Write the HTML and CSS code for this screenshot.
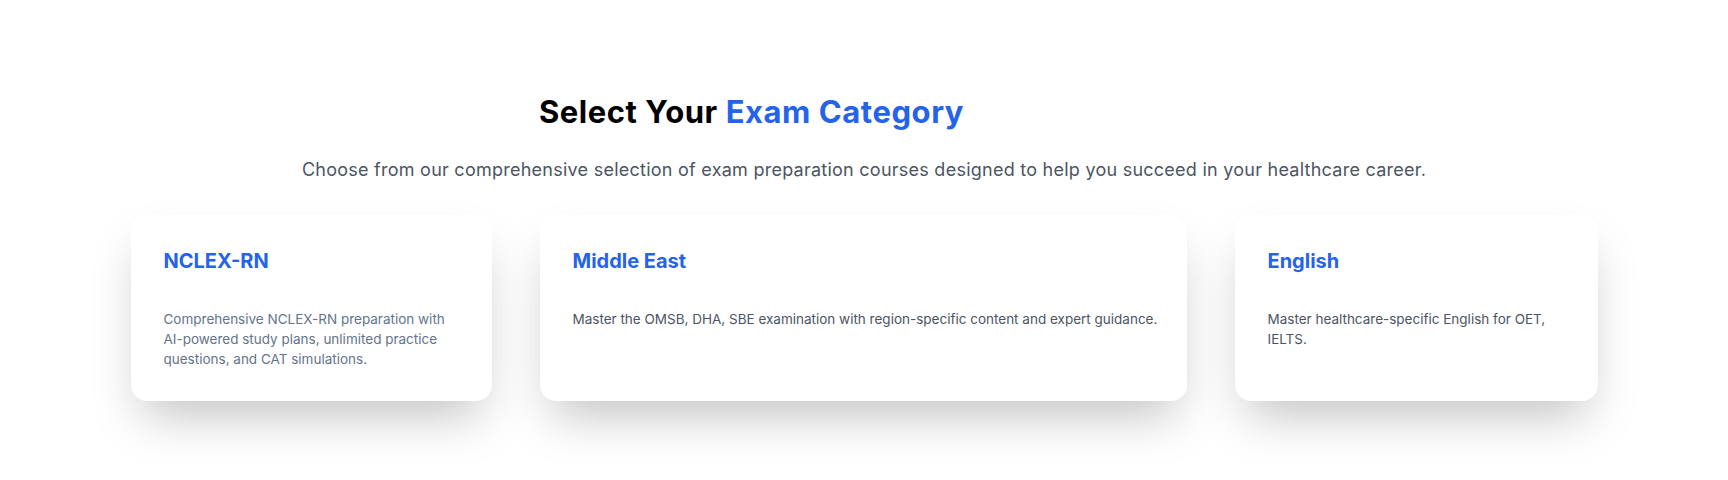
FILE: index.html
```html
<!DOCTYPE html>
<html lang="en">
<head>
<meta charset="utf-8">
<title>Select Your Exam Category</title>
<link rel="stylesheet" href="styles.css">
</head>
<body>
<section class="exams">
  <h2 class="exams-title">Select Your <span class="accent">Exam Category</span></h2>
  <p class="exams-sub">Choose from our comprehensive selection of exam preparation courses designed to help you succeed in your healthcare career.</p>
  <div class="cards">
    <div class="card card-nclex">
      <h3 class="card-title">NCLEX-RN</h3>
      <p class="card-text card-text-slate">Comprehensive NCLEX-RN preparation with AI-powered study plans, unlimited practice questions, and CAT simulations.</p>
    </div>
    <div class="card card-me">
      <h3 class="card-title">Middle East</h3>
      <p class="card-text">Master the OMSB, DHA, SBE examination with region-specific content and expert guidance.</p>
    </div>
    <div class="card card-en">
      <h3 class="card-title">English</h3>
      <p class="card-text">Master healthcare-specific English for OET, IELTS.</p>
    </div>
  </div>
</section>
</body>
</html>
```
FILE: styles.css
```css
* { box-sizing: border-box; }
html, body {
  margin: 0;
  padding: 0;
  background: #ffffff;
  font-family: Inter, "Noto Sans", "Liberation Sans", sans-serif;
}
.exams {
  padding-top: 94px;
  padding-bottom: 80px;
  min-height: 480px;
  display: flex;
  flex-direction: column;
  align-items: center;
}
.exams-title {
  margin: 0;
  font-size: 31px;
  line-height: 36px;
  font-weight: 700;
  letter-spacing: 0.55px;
  color: #000000;
  width: 100%;
  text-align: center;
  padding-right: 225px;
}
.accent { color: #2563eb; }
.exams-sub {
  margin: 26px 0 0;
  font-size: 18px;
  line-height: 28px;
  letter-spacing: 0.25px;
  color: #4b5563;
  text-align: center;
}
.cards {
  margin-top: 31px;
  display: grid;
  grid-template-columns: 361px 647px 363px;
  gap: 48px;
}
.card {
  background: #ffffff;
  border-radius: 16px;
  padding: 32px 24px 32px 33px;
  box-shadow: 0 25px 50px -12px rgba(0,0,0,0.25);
}
.card-title {
  margin: 0;
  font-size: 20px;
  line-height: 28px;
  font-weight: 700;
  color: #2563eb;
}
.card-text {
  margin: 34px 0 0;
  font-size: 13.5px;
  line-height: 20px;
  color: #4b5563;
}
.card-text-slate { color: #64748b; }
```
